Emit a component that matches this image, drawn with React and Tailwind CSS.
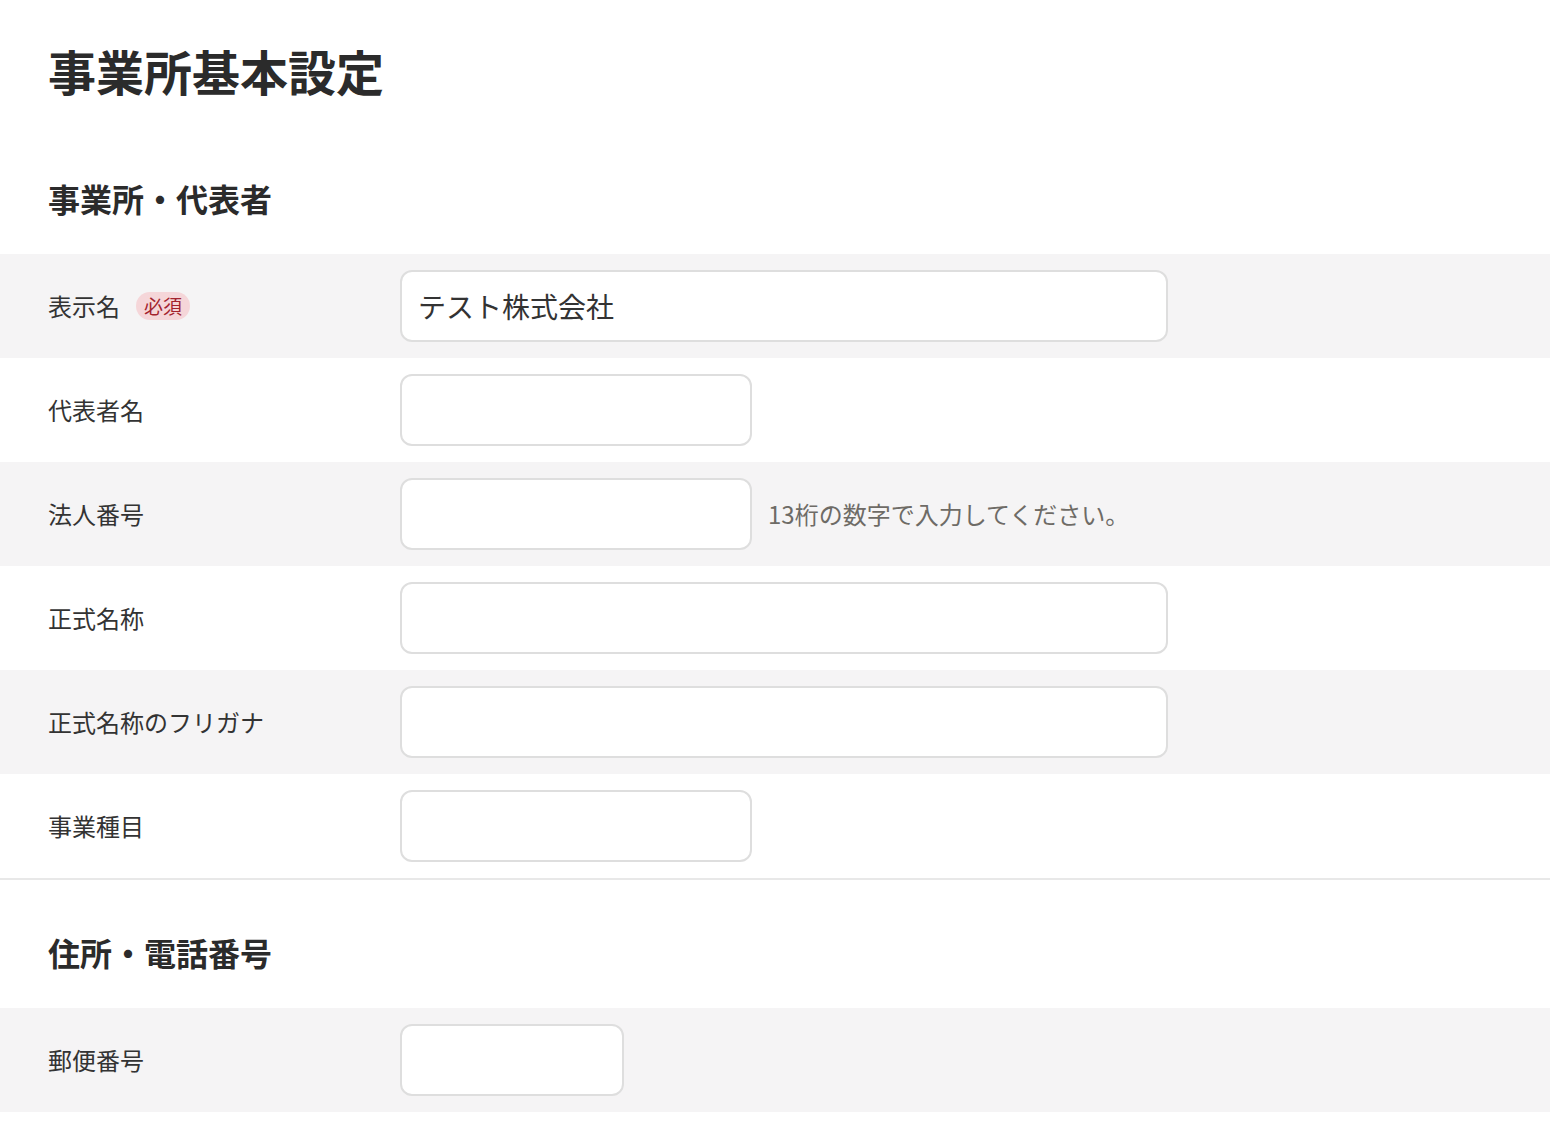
import React from 'react';

const font = { fontFamily: '"Noto Sans CJK JP", "Noto Sans", sans-serif' };

function Row({ label, required, width = 'w-[768px]', value = '', hint, shaded }) {
  return (
    <div className={`flex items-center h-[104px] pl-12 ${shaded ? 'bg-[#f5f4f5]' : 'bg-white'}`}>
      <div className="w-[352px] flex items-center shrink-0">
        <span className="text-[24px] text-[#333]">{label}</span>
        {required && (
          <span className="ml-[16px] px-2 h-[28px] leading-[28px] rounded-full bg-[#f5d6d9] text-[#a3232f] text-[19px]">
            必須
          </span>
        )}
      </div>
      <input
        type="text"
        defaultValue={value}
        className={`${width} h-[72px] rounded-xl border-2 border-[#dedede] bg-white px-[16px] text-[28px] text-[#333] outline-none`}
        style={font}
      />
      {hint && <span className="ml-4 text-[24px] text-[#6e6b66]">{hint}</span>}
    </div>
  );
}

export default function App() {
  return (
    <div className="bg-white min-h-screen text-[#2b2b2b]" style={font}>
      <div className="px-12 pt-[34px]">
        <h1 className="text-[48px] font-bold leading-[72px]">事業所基本設定</h1>
      </div>

      <h2 className="px-12 mt-[68px] mb-[32px] text-[32px] font-bold leading-[48px]">事業所・代表者</h2>
      <div className="border-b-2 border-[#e8e8e8]">
        <Row label="表示名" required value="テスト株式会社" shaded />
        <Row label="代表者名" width="w-[352px]" />
        <Row label="法人番号" width="w-[352px]" hint="13桁の数字で入力してください。" shaded />
        <Row label="正式名称" />
        <Row label="正式名称のフリガナ" shaded />
        <Row label="事業種目" width="w-[352px]" />
      </div>

      <h2 className="px-12 mt-[48px] mb-[32px] text-[32px] font-bold leading-[48px]">住所・電話番号</h2>
      <div>
        <Row label="郵便番号" width="w-[224px]" shaded />
      </div>
    </div>
  );
}
